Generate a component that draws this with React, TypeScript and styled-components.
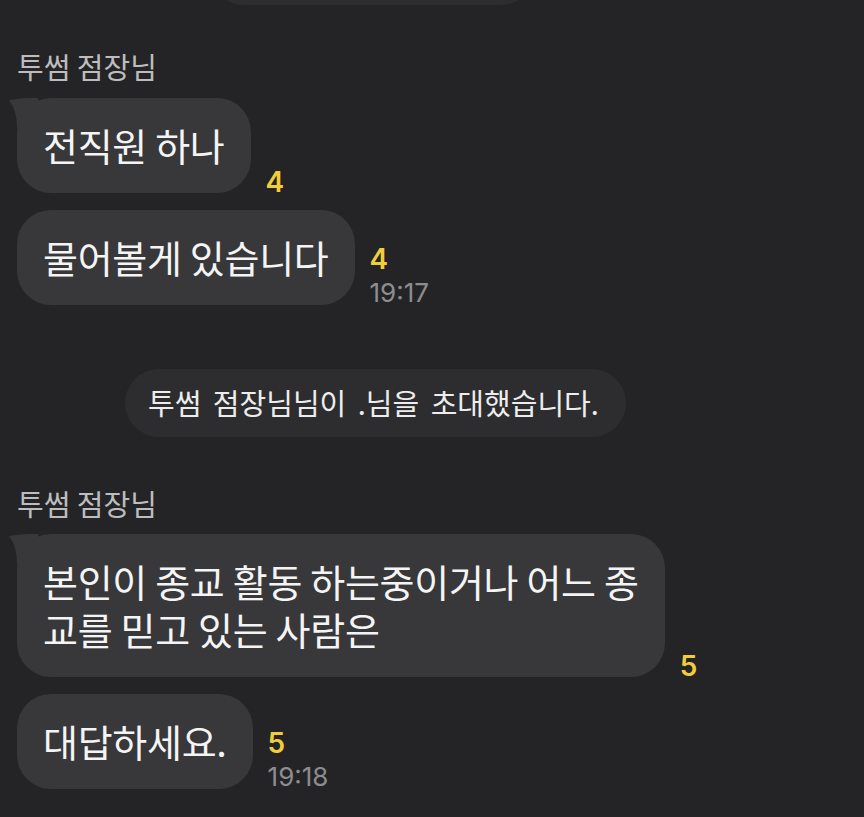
import React from "react";
import styled, { createGlobalStyle } from "styled-components";

const GlobalStyle = createGlobalStyle`
  html, body {
    margin: 0;
    padding: 0;
    background: #242426;
  }
  body {
    font-family: "Noto Sans CJK KR", "Noto Sans", sans-serif;
    -webkit-font-smoothing: antialiased;
  }
`;

const Page = styled.div`
  width: 864px;
  height: 817px;
  overflow: hidden;
  box-sizing: border-box;
  padding-left: 17px;
  display: flex;
  flex-direction: column;
  align-items: flex-start;
  background: #242426;
`;

const SystemPill = styled.div<{ $cut?: boolean; $left: number; $top: number }>`
  margin-left: ${(p) => p.$left}px;
  margin-top: ${(p) => p.$top}px;
  height: 68px;
  box-sizing: border-box;
  padding: 0 27px 0 23px;
  border-radius: 34px;
  background: #2d2d2f;
  color: #ededee;
  font-size: 29px;
  word-spacing: 5px;
  line-height: 66px;
  white-space: nowrap;
  min-width: ${(p) => (p.$cut ? "325px" : "0")};
`;

const SenderName = styled.div<{ $top: number }>`
  margin-top: ${(p) => p.$top}px;
  font-size: 29px;
  line-height: 34px;
  color: #bdbdbf;
  white-space: nowrap;
`;

const Group = styled.div<{ $top: number }>`
  margin-top: ${(p) => p.$top}px;
  display: flex;
  flex-direction: column;
  gap: 17px;
`;

const Row = styled.div`
  display: flex;
  align-items: flex-end;
  gap: 15px;
`;

const Bubble = styled.div`
  position: relative;
  box-sizing: border-box;
  padding: 23px 26px 24px 26px;
  border-radius: 34px;
  background: #38383a;
  color: #f4f4f5;
  font-size: 38px;
  line-height: 48px;
  letter-spacing: -0.3px;
  white-space: nowrap;
`;

const Tail = styled.svg`
  position: absolute;
  left: -9px;
  top: 0;
  width: 36px;
  height: 30px;
`;

const BubbleLine = styled.span`
  position: relative;
  display: block;
  height: 48px;
`;

const Meta = styled.div`
  display: flex;
  flex-direction: column;
  align-items: flex-start;
  margin-bottom: -3px;
  font-family: Inter, "Liberation Sans", sans-serif;
`;

const Count = styled.span<{ $withTime: boolean }>`
  font-size: 28px;
  font-weight: 600;
  line-height: 30px;
  color: #f0cd3a;
  margin-bottom: ${(p) => (p.$withTime ? "4px" : "-1px")};
`;

const Time = styled.span`
  font-size: 26px;
  line-height: 30px;
  color: #8d8d90;
`;

type Msg = { lines: string[]; count: string; time?: string; first?: boolean };

const Message: React.FC<Msg> = ({ lines, count, time, first }) => (
  <Row>
    <Bubble>
      {first && (
        <Tail viewBox="0 0 36 30">
          <path d="M1 2 Q 14 -0.5 30 0 L 30 30 L 9 30 Q 9 12 1 2 Z" fill="#38383a" />
        </Tail>
      )}
      {lines.map((l, i) => (
        <BubbleLine key={i}>{l}</BubbleLine>
      ))}
    </Bubble>
    <Meta>
      <Count $withTime={!!time}>{count}</Count>
      {time && <Time>{time}</Time>}
    </Meta>
  </Row>
);

export default function App() {
  return (
    <>
      <GlobalStyle />
      <Page>
        <SystemPill $cut $left={193} $top={-63} />
        <SenderName $top={44}>투썸 점장님</SenderName>
        <Group $top={15}>
          <Message first lines={["전직원 하나"]} count="4" />
          <Message lines={["물어볼게 있습니다"]} count="4" time="19:17" />
        </Group>
        <SystemPill $left={108} $top={64}>
          투썸 점장님님이 .님을 초대했습니다.
        </SystemPill>
        <SenderName $top={49}>투썸 점장님</SenderName>
        <Group $top={14}>
          <Message
            first
            lines={["본인이 종교 활동 하는중이거나 어느 종", "교를 믿고 있는 사람은"]}
            count="5"
          />
          <Message lines={["대답하세요."]} count="5" time="19:18" />
        </Group>
      </Page>
    </>
  );
}
